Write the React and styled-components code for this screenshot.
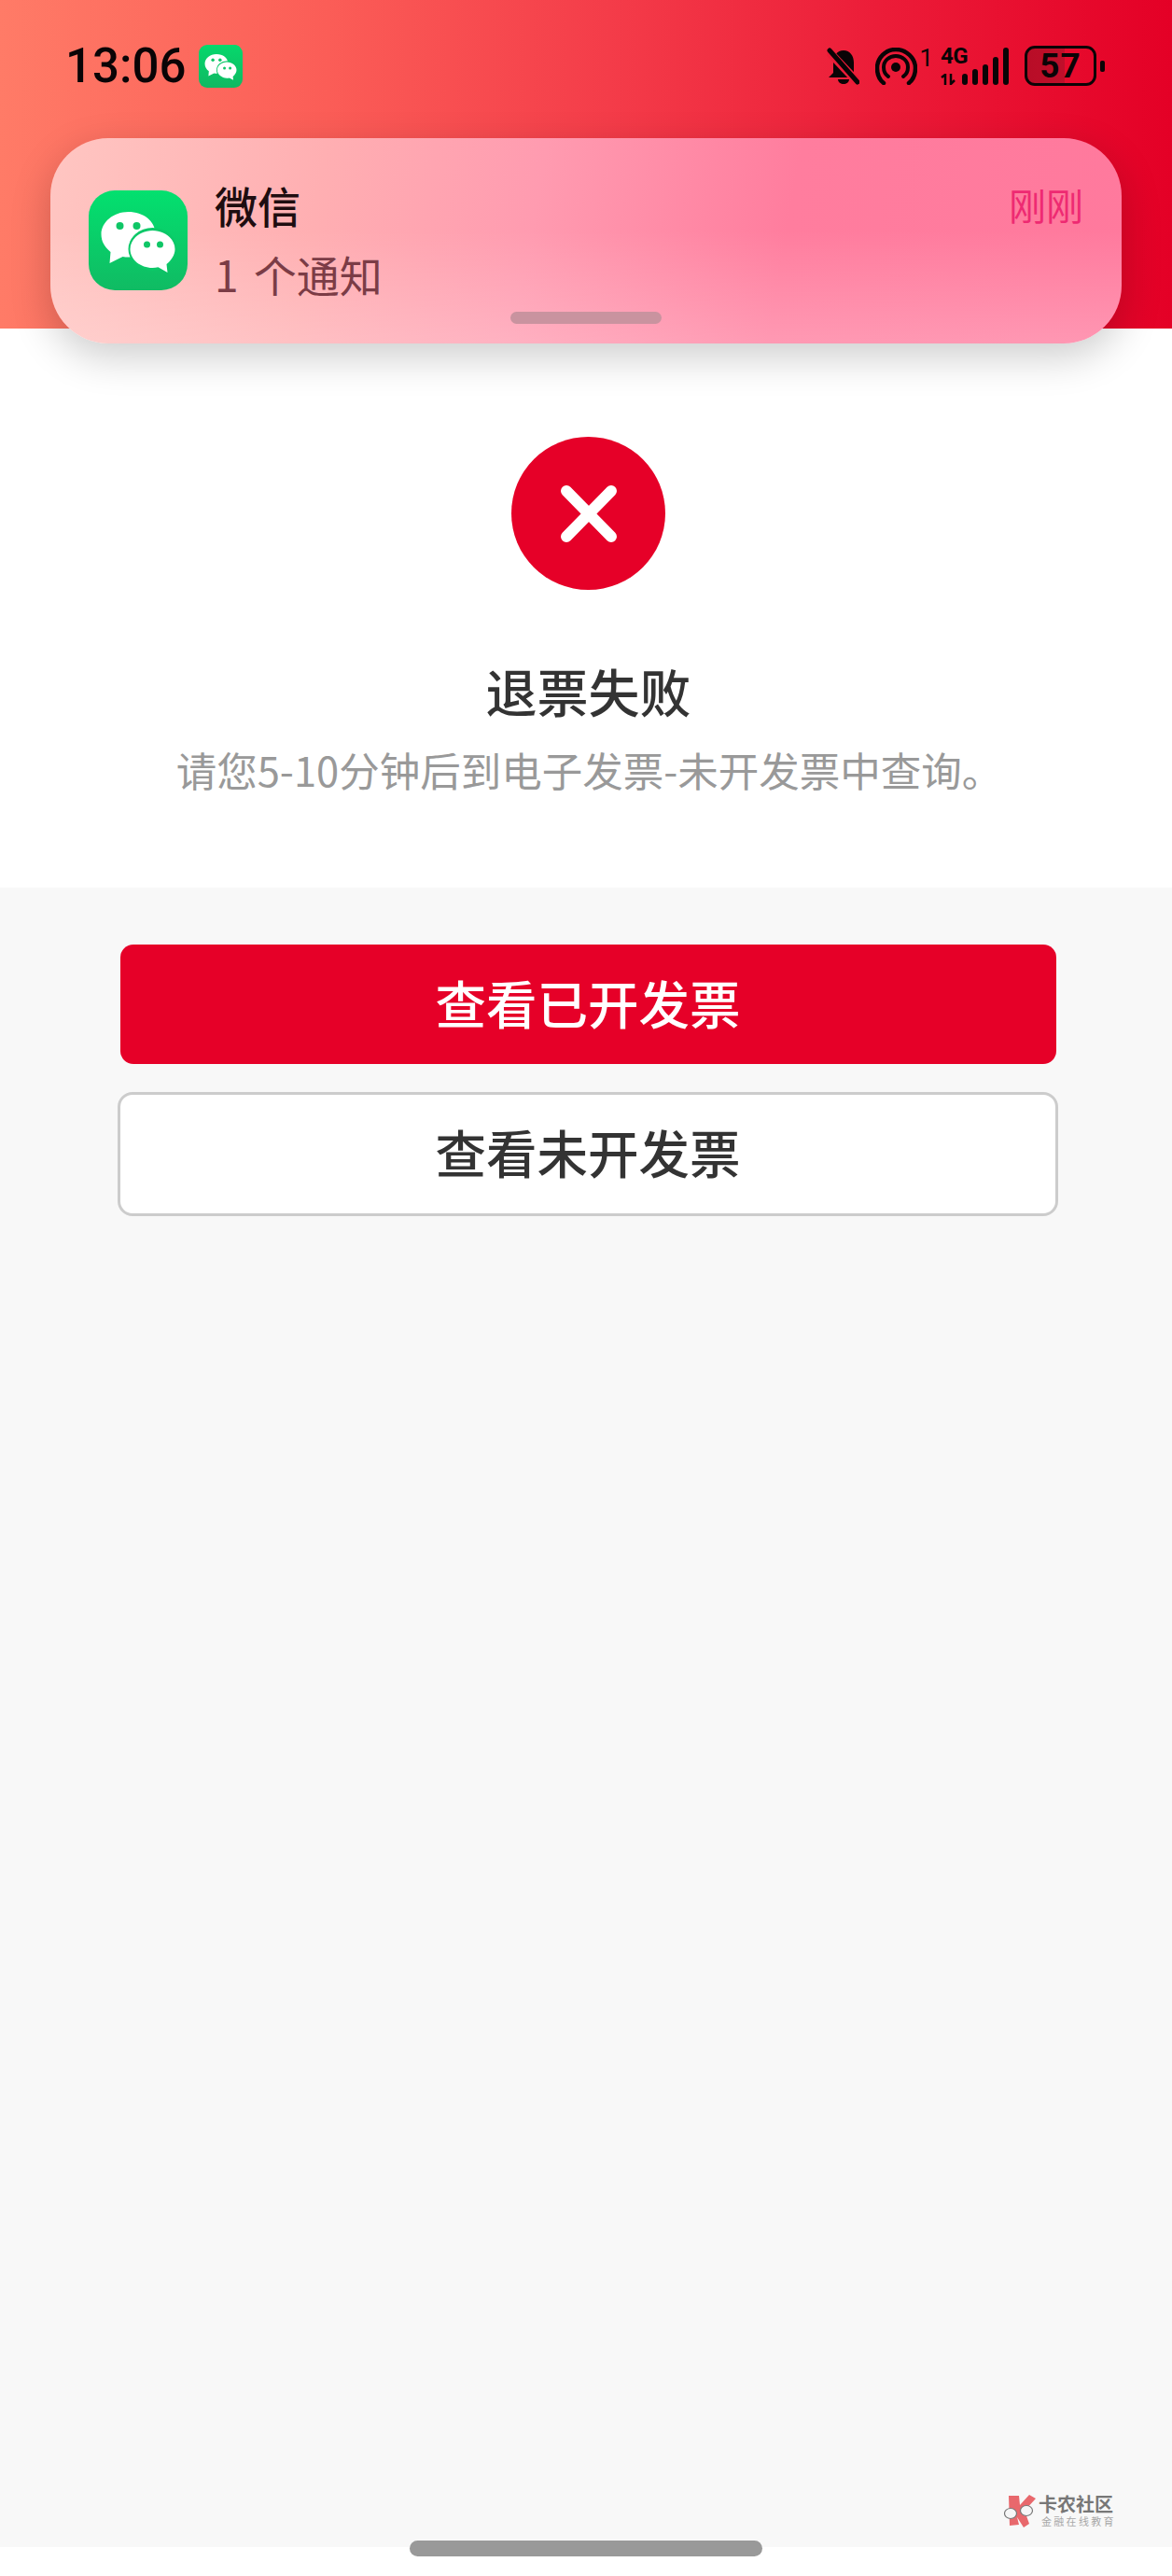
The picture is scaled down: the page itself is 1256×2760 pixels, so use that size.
import styled, { createGlobalStyle } from "styled-components";

const GlobalStyle = createGlobalStyle`
  html, body {
    margin: 0;
    padding: 0;
    background: #ffffff;
  }
  * {
    box-sizing: border-box;
  }
`;

function WeChatIcon() {
  return (
    <svg viewBox="0 0 105 107" width="100%" height="100%">
      <path
        d="M42 23c-16 0-29 11-29 24 0 8 4 14 10 19l-1 12 14-7c2 .4 4 .6 6 .6 16 0 29-11 29-25S58 23 42 23z"
        fill="#ffffff"
      />
      <circle cx="33" cy="38" r="4" fill="#0fc666" />
      <circle cx="51" cy="38" r="4" fill="#0fc666" />
      <ellipse cx="68" cy="63" rx="26" ry="23" fill="#0cc868" />
      <path
        d="M68 43c-13 0-24 9-24 20s11 20 24 20c2 0 4-.2 6-.7l10 5.700-1-9c5-4 9-10 9-16 0-11-11-20-24-20z"
        fill="#ffffff"
      />
      <circle cx="62" cy="58" r="3.500" fill="#0fc666" />
      <circle cx="76" cy="58" r="3.500" fill="#0fc666" />
    </svg>
  );
}

function BellOffIcon() {
  return (
    <svg viewBox="0 0 35 40" width="35" height="40">
      <path d="M18 3c-7 0-11 6-11 13v11l-5 5h32l-5-5V16C29 9 25 3 18 3z" fill="#0a0406" />
      <path d="M12 34h12c0 3-3 5-6 5s-6-2-6-5z" fill="#0a0406" />
      <path d="M2 4l31 33" stroke="#ec1c38" strokeWidth="9" />
      <path d="M3 3l30 34" stroke="#0a0406" strokeWidth="5" strokeLinecap="round" />
    </svg>
  );
}

function HotspotIcon() {
  return (
    <svg viewBox="0 0 45 40" width="45" height="40" fill="none" stroke="#0a0406" strokeLinecap="round">
      <path d="M9 38C4 34 2 28 2 22 2 11 11 2 22 2s21 9 21 20c0 6-2 12-7 16" strokeWidth="4.500" />
      <path d="M14 31c-3-2-5-6-5-10 0-7 6-12 13-12s13 5 13 12c0 4-2 8-5 10" strokeWidth="4" />
      <circle cx="22" cy="21" r="5" fill="#0a0406" stroke="none" />
    </svg>
  );
}

function SignalArrows() {
  return (
    <svg viewBox="0 0 17 12" width="17" height="12" fill="none" stroke="#0a0406" strokeWidth="2.500">
      <path d="M5 12V1L1 4" />
      <path d="M11 0v11l4-4" />
    </svg>
  );
}

const bars = [12, 17, 22, 30, 40];

export default function App() {
  return (
    <Page>
      <GlobalStyle />
      <Header>
        <TimeGroup>
          <Time>13:06</Time>
          <MiniApp>
            <WeChatIcon />
          </MiniApp>
        </TimeGroup>
        <StatusIcons>
          <BellOffIcon />
          <Hotspot>
            <HotspotIcon />
            <HotspotCount>1</HotspotCount>
          </Hotspot>
          <Network>
            <NetworkLabels>
              <NetworkType>4G</NetworkType>
              <SignalArrows />
            </NetworkLabels>
            <SignalBars>
              {bars.map((h) => (
                <SignalBar key={h} $h={h} />
              ))}
            </SignalBars>
          </Network>
          <Battery>
            <BatteryBody>
              <BatteryText>57</BatteryText>
            </BatteryBody>
            <BatteryTip />
          </Battery>
        </StatusIcons>
      </Header>

      <Notification>
        <AppIcon>
          <WeChatIcon />
        </AppIcon>
        <NotificationText>
          <AppName>微信</AppName>
          <NotificationBody>1 个通知</NotificationBody>
        </NotificationText>
        <NotificationTime>刚刚</NotificationTime>
        <Handle />
      </Notification>

      <ResultSection>
        <FailIcon>
          <svg viewBox="0 0 62 63" width="62" height="63" fill="none" stroke="#ffffff" strokeWidth="12" strokeLinecap="round">
            <path d="M7 7l48 49" />
            <path d="M55 7L7 56" />
          </svg>
        </FailIcon>
        <ResultTitle>退票失败</ResultTitle>
        <ResultHint>请您5-10分钟后到电子发票-未开发票中查询。</ResultHint>
      </ResultSection>

      <ActionSection>
        <PrimaryButton>查看已开发票</PrimaryButton>
        <OutlineButton>查看未开发票</OutlineButton>
      </ActionSection>

      <BottomStrip />
      <HomeBar />

      <Watermark>
        <svg viewBox="0 0 34 35" width="34" height="35">
          <path d="M5 1h11l1 10L27 0l7 4-12 13 5 14-6 4-7-11 2 8-10 1z" fill="#e8686c" />
          <ellipse cx="7" cy="20" rx="6.500" ry="5.500" fill="#f6f6f6" stroke="#777" strokeWidth="1.200" />
          <ellipse cx="24" cy="17" rx="6.500" ry="5.500" fill="#f6f6f6" stroke="#777" strokeWidth="1.200" />
        </svg>
        <WatermarkText>
          <WatermarkName>卡农社区</WatermarkName>
          <WatermarkSlogan>金融在线教育</WatermarkSlogan>
        </WatermarkText>
      </Watermark>
    </Page>
  );
}

const cjk = `"Noto Sans CJK SC", "Noto Sans", sans-serif`;

const Page = styled.div`
  position: relative;
  width: 1256px;
  height: 2760px;
  display: flex;
  flex-direction: column;
  overflow: hidden;
  background: #f8f8f8;
  font-family: ${cjk};
`;

const Header = styled.header`
  height: 352px;
  flex-shrink: 0;
  padding: 48px 72px 0 70px;
  display: flex;
  align-items: flex-start;
  justify-content: space-between;
  background: linear-gradient(90deg, #ff7b67 0%, #fb5d57 28%, #f43c49 52%, #ec1c38 75%, #e40026 100%);
`;

const TimeGroup = styled.div`
  display: flex;
  align-items: center;
  gap: 14px;
`;

const Time = styled.span`
  font-family: "Roboto", sans-serif;
  font-weight: 500;
  font-size: 51px;
  line-height: 46px;
  color: #0a0406;
`;

const MiniApp = styled.div`
  width: 47px;
  height: 46px;
  border-radius: 9px;
  overflow: hidden;
  background: linear-gradient(180deg, #06d86c, #10b862);
`;

const StatusIcons = styled.div`
  display: flex;
  align-items: center;
  height: 45px;
`;

const Hotspot = styled.div`
  margin-left: 17px;
  display: flex;
  align-items: flex-start;
  height: 40px;
`;

const HotspotCount = styled.span`
  margin-left: 2px;
  font-family: "Roboto", sans-serif;
  font-size: 26px;
  line-height: 22px;
  color: #0a0406;
`;

const Network = styled.div`
  margin-left: 8px;
  display: flex;
  align-items: flex-end;
  height: 40px;
  gap: 4px;
`;

const NetworkLabels = styled.div`
  display: flex;
  flex-direction: column;
  justify-content: space-between;
  height: 40px;
  width: 19px;
`;

const NetworkType = styled.span`
  font-family: "Roboto", sans-serif;
  font-weight: 700;
  font-size: 24px;
  line-height: 19px;
  letter-spacing: -0.5px;
  color: #0a0406;
  white-space: nowrap;
`;

const SignalBars = styled.div`
  display: flex;
  align-items: flex-end;
  gap: 5px;
  height: 40px;
`;

const SignalBar = styled.span`
  width: 6px;
  height: ${(p) => p.$h}px;
  border-radius: 3px;
  background: #0a0406;
`;

const Battery = styled.div`
  margin-left: 17px;
  display: flex;
  align-items: center;
  gap: 4px;
`;

const BatteryBody = styled.div`
  width: 77px;
  height: 43px;
  border: 3px solid #0a0406;
  border-radius: 11px;
  display: flex;
  align-items: center;
  justify-content: center;
  background: linear-gradient(90deg, #b80d27 0%, #c00f2a 57%, transparent 57%);
`;

const BatteryText = styled.span`
  font-family: "Roboto", sans-serif;
  font-weight: 700;
  font-size: 37px;
  line-height: 37px;
  color: #0a0406;
  letter-spacing: 1px;
`;

const BatteryTip = styled.span`
  width: 5px;
  height: 12px;
  border-radius: 2px;
  background: #0a0406;
`;

const Notification = styled.div`
  position: absolute;
  top: 148px;
  left: 54px;
  width: 1148px;
  height: 220px;
  border-radius: 62px;
  padding: 56px 42px 0 41px;
  display: flex;
  align-items: flex-start;
  background:
    linear-gradient(180deg, rgba(255, 255, 255, 0) 45%, rgba(255, 255, 255, 0.22) 100%),
    linear-gradient(100deg, #ffc6c2 0%, #ffafb2 25%, #ff9bb0 45%, #ff7d9e 68%, #ff799d 100%);
  box-shadow: 0 14px 44px rgba(0, 0, 0, 0.2);
`;

const AppIcon = styled.div`
  width: 106px;
  height: 107px;
  border-radius: 28px;
  overflow: hidden;
  flex-shrink: 0;
  background: linear-gradient(180deg, #03e06f, #10bb63);
`;

const NotificationText = styled.div`
  margin-left: 29px;
  display: flex;
  flex-direction: column;
`;

const AppName = styled.span`
  font-size: 46px;
  line-height: 46px;
  margin-top: -8px;
  font-weight: 500;
  color: #1e0d10;
`;

const NotificationBody = styled.span`
  margin-top: 28px;
  font-size: 46px;
  line-height: 46px;
  word-spacing: 6px;
  color: #7b3c46;
`;

const NotificationTime = styled.span`
  margin-left: auto;
  margin-top: -5px;
  margin-right: -1px;
  font-size: 40px;
  line-height: 40px;
  color: #ee2a72;
`;

const Handle = styled.span`
  position: absolute;
  left: 493px;
  top: 186px;
  width: 162px;
  height: 13px;
  border-radius: 7px;
  background: #c9939f;
`;

const ResultSection = styled.section`
  flex-shrink: 0;
  padding: 116px 0 99px 5px;
  display: flex;
  flex-direction: column;
  align-items: center;
  background: #ffffff;
`;

const FailIcon = styled.div`
  width: 165px;
  height: 164px;
  border-radius: 50%;
  display: flex;
  align-items: center;
  justify-content: center;
  background: #e60028;
`;

const ResultTitle = styled.h1`
  margin: 77px 0 0;
  font-size: 55px;
  line-height: 60px;
  font-weight: 500;
  color: #333333;
`;

const ResultHint = styled.p`
  margin: 31px 0 2px 2px;
  font-size: 43.5px;
  line-height: 50px;
  color: #999999;
  white-space: nowrap;
`;

const ActionSection = styled.section`
  flex: 1;
  padding: 61px 0 0 4px;
  display: flex;
  flex-direction: column;
  align-items: center;
  gap: 30px;
`;

const PrimaryButton = styled.button`
  width: 1003px;
  height: 128px;
  border: none;
  border-radius: 14px;
  padding: 0 0 6px;
  font-family: ${cjk};
  font-size: 54.5px;
  font-weight: 500;
  color: #ffffff;
  background: #e60028;
`;

const OutlineButton = styled.button`
  width: 1008px;
  height: 133px;
  border: 3px solid #cccccc;
  border-radius: 16px;
  padding: 0 0 6px;
  font-family: ${cjk};
  font-size: 54.5px;
  font-weight: 500;
  color: #333333;
  background: #ffffff;
`;

const BottomStrip = styled.div`
  height: 31px;
  flex-shrink: 0;
  background: #ffffff;
`;

const HomeBar = styled.span`
  position: absolute;
  left: 439px;
  bottom: 21px;
  width: 378px;
  height: 17px;
  border-radius: 9px;
  background: #999999;
`;

const Watermark = styled.div`
  position: absolute;
  left: 1076px;
  top: 2673px;
  display: flex;
  align-items: flex-start;
  gap: 3px;
`;

const WatermarkText = styled.div`
  display: flex;
  flex-direction: column;
`;

const WatermarkName = styled.span`
  font-size: 20px;
  line-height: 20px;
  font-weight: 700;
  color: #777777;
`;

const WatermarkSlogan = styled.span`
  margin-top: 2px;
  padding-left: 3px;
  font-size: 11px;
  line-height: 12px;
  letter-spacing: 2.300px;
  color: #a8a8a8;
  white-space: nowrap;
`;
